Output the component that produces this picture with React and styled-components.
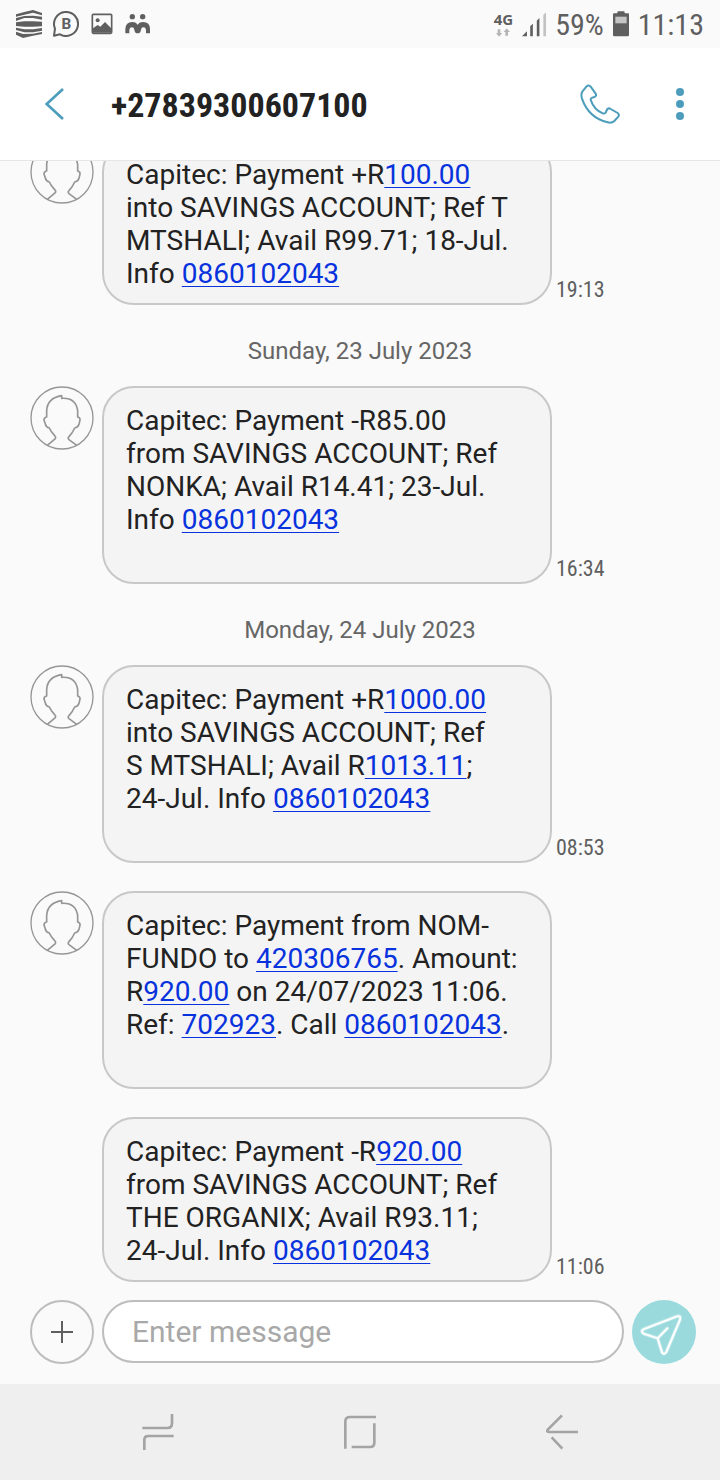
import React from "react";
import styled, { createGlobalStyle } from "styled-components";

const messages = [
	{
		avatar: true,
		time: "19:13",
		parts: [
			"Capitec: Payment +R",
			{ phone: "100.00" },
			"\ninto SAVINGS ACCOUNT; Ref T\nMTSHALI; Avail R99.71; 18-Jul.\nInfo ",
			{ phone: "0860102043" },
		],
	},
	{ date: "Sunday, 23 July 2023" },
	{
		avatar: true,
		time: "16:34",
		parts: [
			"Capitec: Payment -R85.00\nfrom SAVINGS ACCOUNT; Ref\nNONKA; Avail R14.41; 23-Jul.\nInfo ",
			{ phone: "0860102043" },
			"\n\n",
		],
	},
	{ date: "Monday, 24 July 2023" },
	{
		avatar: true,
		time: "08:53",
		parts: [
			"Capitec: Payment +R",
			{ phone: "1000.00" },
			"\ninto SAVINGS ACCOUNT; Ref\nS MTSHALI; Avail R",
			{ phone: "1013.11" },
			";\n24-Jul. Info ",
			{ phone: "0860102043" },
			"\n\n",
		],
	},
	{
		avatar: true,
		parts: [
			"Capitec: Payment from NOM-\nFUNDO to ",
			{ phone: "420306765" },
			". Amount:\nR",
			{ phone: "920.00" },
			" on 24/07/2023 11:06.\nRef: ",
			{ phone: "702923" },
			". Call ",
			{ phone: "0860102043" },
			".\n\n",
		],
	},
	{
		time: "11:06",
		parts: [
			"Capitec: Payment -R",
			{ phone: "920.00" },
			"\nfrom SAVINGS ACCOUNT; Ref\nTHE ORGANIX; Avail R93.11;\n24-Jul. Info ",
			{ phone: "0860102043" },
		],
	},
];

const StackIcon = () => (
	<svg width="26" height="28" viewBox="51 29 78 84" fill="#5f5f5f">
		<path d="M51 42L76 35L102 29L129 38V45L102 37L76 43L51 49Z" />
		<path d="M51 53L76 47L102 46L129 49V58L102 53H76L51 62Z" />
		<path d="M51 66L76 63H102L129 64V78L102 79H76L51 77Z" />
		<path d="M51 82L76 87H102L129 83V91L102 96H76L51 89Z" />
		<path d="M51 94L72 101L102 100L129 95V101L102 106L72 113L51 103Z" />
	</svg>
);

const BusinessIcon = () => (
	<svg width="26" height="26" viewBox="159 33 78 78">
		<path
			d="M165 86L162 107L180 103A36 36 0 1 0 165 86Z"
			fill="none"
			stroke="#5f5f5f"
			strokeWidth="6"
			strokeLinejoin="round"
		/>
		<text x="199" y="88" textAnchor="middle" fontFamily="Roboto, sans-serif" fontWeight="700" fontSize="46" fill="#5f5f5f">
			B
		</text>
	</svg>
);

const PictureIcon = () => (
	<svg width="24" height="24" viewBox="271 36 72 72">
		<rect x="278" y="43" width="58" height="57" rx="3" fill="none" stroke="#5f5f5f" strokeWidth="5" />
		<circle cx="294" cy="61" r="6" fill="#5f5f5f" />
		<path d="M280 85L294 75L302 80L316 66L334 84V98H280Z" fill="#5f5f5f" />
	</svg>
);

const PeopleIcon = () => (
	<svg width="26" height="22" viewBox="376 40 78 66" fill="#5f5f5f">
		<circle cx="398" cy="51" r="8" />
		<circle cx="429" cy="51" r="8" />
		<path d="M377 101V88Q378 67 398 67Q410 67 414 76Q418 67 430 67Q451 67 451 88V101H439V90Q438 83 431 83Q425 83 424 90Q423 101 414 101Q405 101 404 90Q403 83 397 83Q390 83 389 90V101Z" />
	</svg>
);

const DataIcon = () => (
	<svg width="14" height="9" viewBox="50 82 42 27" fill="#b5b5b5">
		<path d="M55 86H63V97H69L59 108L50 97H55Z" />
		<path d="M78 105H86V94H92L82 83L73 94H78Z" />
	</svg>
);

const SignalIcon = () => (
	<svg width="24" height="25" viewBox="128 35 73 75">
		<path d="M128 108L143 93V108Z" fill="#5f5f5f" />
		<path d="M153 78L161 70V108H153Z" fill="#5f5f5f" />
		<path d="M173 61L181 53V108H173Z" fill="#5f5f5f" />
		<path d="M193 43L201 36V108H193Z" fill="#c2c2c2" />
	</svg>
);

const BatteryIcon = () => (
	<svg width="16" height="26" viewBox="399 32 48 78">
		<path d="M402 39H412V36Q412 33 415 33H431Q434 33 434 36V39H444Q447 39 447 42V104Q447 108 443 108H403Q399 108 399 104V42Q399 39 402 39Z" fill="#5f5f5f" />
		<rect x="406" y="49" width="34" height="20" fill="#c4c4c4" />
	</svg>
);

const BackIcon = () => (
	<svg width="20" height="32" viewBox="135 115 60 96">
		<path d="M189 118L140 163L189 208" fill="none" stroke="#4c9dbb" strokeWidth="8" />
	</svg>
);

const PhoneIcon = () => (
	<svg width="40" height="40" viewBox="120 101 120 120">
		<path
			d="M127 124L139 109Q146 102 152 109L167 130Q171 137 163 140Q149 143 153 151Q162 178 188 189Q197 192 199 182Q204 170 212 176L233 188Q239 193 235 199L223 212Q215 219 203 216Q146 203 126 145Q122 131 127 124Z"
			fill="none"
			stroke="#4c9dbb"
			strokeWidth="6"
			strokeLinejoin="round"
		/>
	</svg>
);

const MoreIcon = () => (
	<svg width="8" height="32" viewBox="0 0 8 32" fill="#4c9dbb">
		<circle cx="4" cy="4" r="4" />
		<circle cx="4" cy="16" r="4" />
		<circle cx="4" cy="28" r="4" />
	</svg>
);

const PersonIcon = () => (
	<svg width="64" height="64" viewBox="30 48 192 192" fill="none" stroke="#969696">
		<circle cx="126" cy="144" r="93" strokeWidth="4" />
		<path
			d="M82 226L106 206Q109 202 104 197Q92 184 88 174Q78 172 76 162L72 150Q72 142 80 141V122Q82 84 125 77V85Q167 82 173 122V141Q181 143 180 150L177 163Q174 173 164 174Q158 188 147 200Q142 205 147 209L170 226"
			strokeWidth="5"
			strokeLinejoin="round"
		/>
	</svg>
);

const PlusIcon = () => (
	<svg width="22" height="22" viewBox="0 0 22 22">
		<path d="M11 0V22M0 11H22" stroke="#5f5f5f" strokeWidth="2" />
	</svg>
);

const sendPath =
	"M430 268L531 229Q544 226 540 239L499 336Q492 346 486 337L473 295L431 281Q421 274 430 268ZM473 295L502 265";

const SendIcon = () => (
	<svg width="64" height="64" viewBox="396 180 192 192" fill="none" strokeLinejoin="round" strokeLinecap="round">
		<path d={sendPath} stroke="#bfe8ea" strokeWidth="11" />
		<path d={sendPath} stroke="#fff" strokeWidth="6" />
	</svg>
);

const NavIcon = ({ box, d }) => (
	<svg width="36" height="36" viewBox={box} fill="none" stroke="#a4a4a4" strokeWidth="8">
		<path d={d} />
	</svg>
);

const Message = ({ item }) => (
	<MessageRow>
		<Avatar>{item.avatar && <PersonIcon />}</Avatar>
		<Bubble>
			{item.parts.map((part, i) =>
				part.phone ? (
					<BubbleLink key={i} href={`tel:${part.phone}`}>
						{part.phone}
					</BubbleLink>
				) : (
					part
				)
			)}
		</Bubble>
		{item.time && <Time>{item.time}</Time>}
	</MessageRow>
);

const App = () => {
	return (
		<Page>
			<GlobalStyle />
			<StatusBar>
				<StatusLeft>
					<StackIcon />
					<BusinessIcon />
					<PictureIcon />
					<PeopleIcon />
				</StatusLeft>
				<StatusRight>
					<Network>
						4G
						<DataIcon />
					</Network>
					<SignalIcon />
					<StatusText>59%</StatusText>
					<BatteryIcon />
					<StatusText>11:13</StatusText>
				</StatusRight>
			</StatusBar>
			<Header>
				<IconButton aria-label="Back">
					<BackIcon />
				</IconButton>
				<Title>+27839300607100</Title>
				<IconButton aria-label="Call">
					<PhoneIcon />
				</IconButton>
				<IconButton aria-label="More options">
					<MoreIcon />
				</IconButton>
			</Header>
			<Thread>
				{messages.map((item, i) =>
					item.date ? (
						<DateLabel key={i}>{item.date}</DateLabel>
					) : (
						<Message key={i} item={item} />
					)
				)}
			</Thread>
			<Composer>
				<AddButton type="button" aria-label="Add attachment">
					<PlusIcon />
				</AddButton>
				<MessageInput aria-label="Enter message" placeholder="Enter message" />
				<SendButton type="button" aria-label="Send">
					<SendIcon />
				</SendButton>
			</Composer>
			<NavBar>
				<NavButton aria-label="Recents">
					<NavIcon
						box="123 72 108 108"
						d="M130 114H206Q219 114 219 100V72M224 138H148Q136 138 136 150V180"
					/>
				</NavButton>
				<NavButton aria-label="Home">
					<NavIcon
						box="726 72 108 108"
						d="M736 176V94Q736 81 750 81H828M823 100V158Q823 171 810 171H755"
					/>
				</NavButton>
				<NavButton aria-label="Back">
					<NavIcon
						box="1332 72 108 108"
						d="M1386 76L1344 118Q1338 126 1348 126H1434M1355 142L1387 176"
					/>
				</NavButton>
			</NavBar>
		</Page>
	);
};

const GlobalStyle = createGlobalStyle`
	* {
		box-sizing: border-box;
	}
	body {
		margin: 0;
		font-family: Roboto, sans-serif;
		color: #222;
		background-color: #fafafa;
	}
	svg {
		display: block;
		flex: none;
	}
	button {
		padding: 0;
		border: none;
		background: none;
		cursor: pointer;
		display: flex;
		justify-content: center;
		align-items: center;
	}
`;
const Page = styled.div`
	height: 100vh;
	display: flex;
	flex-direction: column;
`;

const StatusBar = styled.div`
	height: 48px;
	flex: none;
	padding: 0 16px;
	display: flex;
	justify-content: space-between;
	align-items: center;
	color: #5f5f5f;
`;
const StatusLeft = styled.div`
	display: flex;
	align-items: center;
	gap: 11px;
`;
const StatusRight = styled.div`
	display: flex;
	align-items: center;
	gap: 9px;
`;
const Network = styled.div`
	display: flex;
	flex-direction: column;
	align-items: center;
	gap: 1px;
	font-family: "Noto Sans", sans-serif;
	font-weight: 700;
	font-size: 15px;
	line-height: 15px;
`;
const StatusText = styled.div`
	padding-top: 2px;
	font-family: "Roboto Condensed", Roboto, sans-serif;
	font-size: 30px;
	line-height: 40px;
`;

const Header = styled.header`
	height: 113px;
	flex: none;
	padding: 0 16px 0 31px;
	display: flex;
	align-items: center;
	background-color: #fff;
	border-bottom: 1px solid #e6e6e6;
`;
const IconButton = styled.button`
	width: 48px;
	height: 48px;
	flex: none;
	& + & {
		margin-left: 32px;
	}
`;
const Title = styled.h1`
	flex: 1;
	margin: 0;
	padding: 2px 0 0 32px;
	font-family: "Roboto Condensed", Roboto, sans-serif;
	font-size: 34px;
	font-weight: 700;
	line-height: 40px;
`;

const Thread = styled.main`
	flex: 1;
	min-height: 0;
	overflow: hidden;
	padding-left: 30px;
	display: flex;
	flex-direction: column;
	justify-content: flex-end;
`;
const MessageRow = styled.div`
	flex: none;
	display: flex;
	& + & {
		margin-top: 28px;
	}
`;
const Avatar = styled.div`
	width: 64px;
	flex: none;
	margin-right: 8px;
`;
const Bubble = styled.div`
	flex: 0 1 450px;
	padding: 16px 22px 13px;
	border: 2px solid #c8c8c8;
	border-radius: 32px;
	background-color: #f4f4f4;
	font-size: 28px;
	line-height: 33px;
	white-space: pre-line;
`;
const BubbleLink = styled.a`
	color: #0732dd;
	text-decoration: underline;
	text-decoration-thickness: 1px;
	text-underline-offset: 3px;
`;
const Time = styled.div`
	align-self: flex-end;
	margin-left: 4px;
	color: #5f5f5f;
	font-family: "Roboto Condensed", Roboto, sans-serif;
	font-size: 22px;
	line-height: 30px;
`;
const DateLabel = styled.div`
	flex: none;
	padding: 32px 30px 21px 0;
	text-align: center;
	color: #666;
	font-size: 24px;
	line-height: 28px;
`;

const Composer = styled.form`
	flex: none;
	padding: 18px 24px 20px 30px;
	display: flex;
	gap: 8px;
`;
const AddButton = styled.button`
	width: 64px;
	height: 64px;
	flex: none;
	&& {
		border: 2px solid #bdbdbd;
	}
	border-radius: 50%;
`;
const MessageInput = styled.input`
	flex: 1;
	min-width: 0;
	height: 63px;
	padding: 0 28px;
	border: 2px solid #bdbdbd;
	border-radius: 32px;
	background-color: #fff;
	font-family: Roboto, sans-serif;
	font-size: 30px;
	outline: none;
	&::placeholder {
		color: #a8a8a8;
		opacity: 1;
	}
`;
const SendButton = styled.button`
	width: 64px;
	height: 64px;
	flex: none;
	&& {
		background-color: #9adadd;
	}
	border-radius: 50%;
`;

const NavBar = styled.nav`
	flex: none;
	height: 96px;
	display: grid;
	grid-template-columns: repeat(3, 28%);
	justify-content: center;
	background-color: #efefef;
`;
const NavButton = styled.button`
	height: 96px;
`;
export default App;
